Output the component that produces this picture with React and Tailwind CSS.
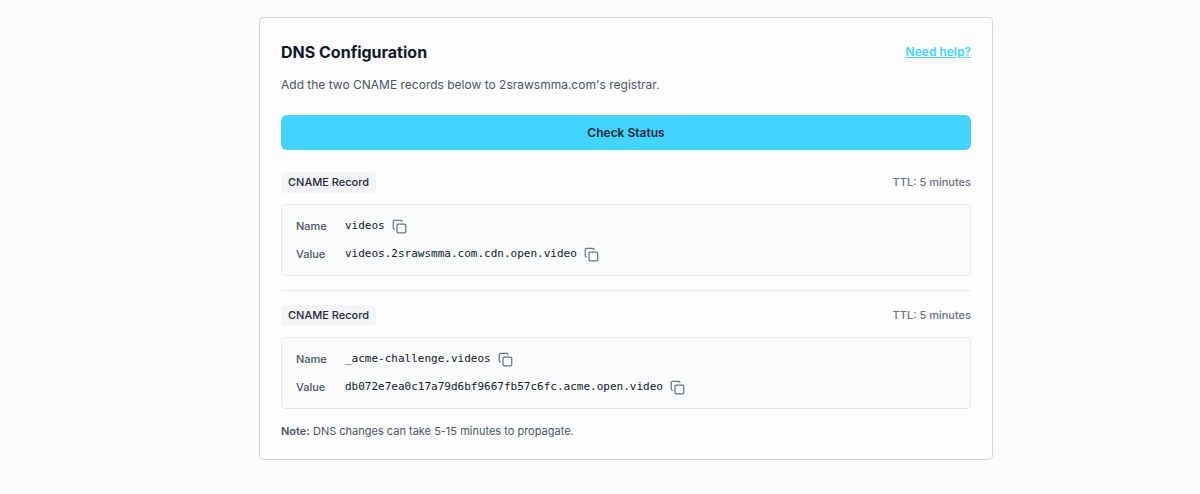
import { Copy } from 'lucide-react';

const domain = '2srawsmma.com';

const records = [
  { name: 'videos', value: 'videos.2srawsmma.com.cdn.open.video' },
  { name: '_acme-challenge.videos', value: 'db072e7ea0c17a79d6bf9667fb57c6fc.acme.open.video' },
];

const copyText = (text) => {
  navigator.clipboard?.writeText(text);
};

const Field = ({ label, value }) => (
  <div className="flex items-center h-7">
    <dt className="w-[49px] text-[11px] font-medium text-gray-600">{label}</dt>
    <dd className="flex items-center gap-[7px]">
      <code className="font-['DejaVu_Sans_Mono',monospace] text-[11px] text-gray-900">{value}</code>
      <button onClick={() => copyText(value)} aria-label={`Copy ${value}`} className="text-gray-500">
        <Copy className="w-[15px] h-[15px]" />
      </button>
    </dd>
  </div>
);

const Record = ({ record }) => (
  <section>
    <div className="flex items-center justify-between">
      <h3 className="h-[21px] flex items-center px-[7px] rounded-sm bg-gray-100 text-[11px] font-medium text-gray-800">
        CNAME Record
      </h3>
      <span className="text-[11px] font-medium text-gray-500">TTL: 5 minutes</span>
    </div>
    <dl className="mt-[11px] px-[14px] py-[7px] rounded-sm border border-gray-200 bg-[#fafbfd]">
      <Field label="Name" value={record.name} />
      <Field label="Value" value={record.value} />
    </dl>
  </section>
);

const App = () => {
  return (
    <div className="min-h-screen bg-[#fafbfd] font-['Inter',sans-serif] pt-[17px] pb-8 pl-[52px]">
      <main className="mx-auto w-full max-w-[734px] bg-[#fdfdfd] border border-gray-300 rounded-sm px-[21px] pt-6 pb-5">
        <div className="flex items-center justify-between">
          <h1 className="text-[16px] leading-5 font-bold text-gray-900">DNS Configuration</h1>
          <a href="#help" className="text-[12px] leading-5 font-semibold text-[#43d3ff] underline">Need help?</a>
        </div>
        <p className="mt-[15px] text-[12px] leading-4 text-gray-600">
          Add the two CNAME records below to {domain}'s registrar.
        </p>
        <button className="mt-[22px] w-full h-[35px] rounded-md bg-[#43d3ff] text-[12px] font-semibold text-gray-800">
          Check Status
        </button>
        <div className="mt-[22px] flex flex-col gap-[14px]">
          <Record record={records[0]} />
          <hr className="border-gray-200" />
          <Record record={records[1]} />
        </div>
        <p className="mt-[14px] text-[11px] leading-4 text-gray-600">
          <strong className="font-semibold">Note:</strong> DNS changes can take 5-15 minutes to propagate.
        </p>
      </main>
    </div>
  );
};

export default App;
